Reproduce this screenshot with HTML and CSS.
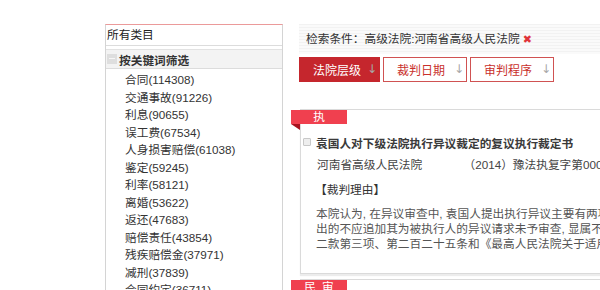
FILE: index.html
```html
<!DOCTYPE html>
<html lang="zh-CN">
  <head>
    <meta charset="UTF-8" />
    <title>裁判文书检索</title>
    <link rel="stylesheet" href="styles.css">
  </head>
  <body>
    <div class="page">
      <!-- 左侧类目 -->
      <aside class="category">
        <div class="cat-title">所有类目</div>
        <div class="cat-group"><span class="fold"></span>按关键词筛选</div>
        <ul class="keyword-list">
          <li>合同(114308)</li>
          <li>交通事故(91226)</li>
          <li>利息(90655)</li>
          <li>误工费(67534)</li>
          <li>人身损害赔偿(61038)</li>
          <li>鉴定(59245)</li>
          <li>利率(58121)</li>
          <li>离婚(53622)</li>
          <li>返还(47683)</li>
          <li>赔偿责任(43854)</li>
          <li>残疾赔偿金(37971)</li>
          <li>减刑(37839)</li>
          <li>合同约定(36711)</li>
        </ul>
      </aside>

      <!-- 检索结果 -->
      <main class="results">
        <div class="search-cond">
          检索条件：高级法院:河南省高级人民法院<span class="remove">✖</span>
        </div>

        <div class="sort-bar">
          <button class="sort-btn active">法院层级<span class="arrow">↓</span></button>
          <button class="sort-btn">裁判日期<span class="arrow">↓</span></button>
          <button class="sort-btn">审判程序<span class="arrow">↓</span></button>
        </div>

        <div class="case-card">
          <span class="tag">执</span>
          <div class="case-title">
            <span class="check"></span>袁国人对下级法院执行异议裁定的复议执行裁定书
          </div>
          <div class="case-info">
            <span class="court">河南省高级人民法院</span>
            <span class="case-no">（2014）豫法执复字第00010号</span>
          </div>
          <div class="reason-label">【裁判理由】</div>
          <p class="reason">
            本院认为, 在异议审查中, 袁国人提出执行异议主要有两项理由, 一是<br />
            出的不应追加其为被执行人的异议请求未予审查, 显属不当, 违反了<br />
            二款第三项、第二百二十五条和《最高人民法院关于适用〈中华人民
          </p>
        </div>

        <div class="case-card">
          <span class="tag tag-wide">民审</span>
        </div>
      </main>
    </div>
  </body>
</html>
```

FILE: styles.css
```css
* {
  margin: 0;
  padding: 0;
  box-sizing: border-box;
}

body {
  font-family: "Liberation Sans", "Noto Sans CJK SC", sans-serif;
  font-size: 11.7px;
  color: #333;
  background: white;
  height: 290px;
  overflow: hidden;
}

.page {
  display: flex;
  align-items: flex-start;
  gap: 16px;
  padding: 24px 0 0 105px;
}

/* 左侧类目 */
.category {
  flex: none;
  width: 178px;
  height: 320px;
  border: 1px solid #d4d4d4;
  border-top-color: #eb9a9a;
}

.cat-title {
  height: 21px;
  line-height: 20px;
  padding-left: 1px;
  color: #222;
  border-bottom: 1px solid #dcdcdc;
}

.cat-group {
  display: flex;
  align-items: center;
  height: 20px;
  margin-top: 3px;
  padding-left: 1px;
  background: #f3f3f3;
  border-top: 1px solid #e2e2e2;
  border-bottom: 1px solid #dcdcdc;
  font-weight: bold;
  color: #333;
}

.fold {
  position: relative;
  width: 10px;
  height: 10px;
  margin-right: 2px;
  background: #dedede;
}

.fold::after {
  content: "";
  position: absolute;
  left: 2px;
  right: 2px;
  top: 4px;
  height: 1px;
  background: #f6f6f6;
}

.keyword-list {
  list-style: none;
  padding: 2px 0 0 19px;
}

.keyword-list li {
  line-height: 17.5px;
  white-space: nowrap;
}

/* 检索结果 */
.results {
  flex: none;
  width: 330px;
}

.search-cond {
  height: 30px;
  line-height: 30px;
  padding-left: 7px;
  white-space: nowrap;
  background: repeating-linear-gradient(#f2f2f2 0, #f2f2f2 1px, #fafafa 1px, #fafafa 3px);
}

.remove {
  margin-left: 3px;
  color: #e0333b;
  font-family: "DejaVu Sans", sans-serif;
  font-size: 11px;
}

.sort-bar {
  display: flex;
  gap: 3px;
  margin-top: 3px;
}

.sort-btn {
  position: relative;
  width: 84px;
  height: 25px;
  padding-left: 13px;
  text-align: left;
  font-family: inherit;
  font-size: 12px;
  color: #c9302c;
  background: white;
  border: 1px solid #d05252;
  cursor: pointer;
}

.sort-btn.active {
  width: 81px;
  color: white;
  background: #c5262d;
  border-color: #c5262d;
}

.arrow {
  position: absolute;
  right: 2px;
  top: 4px;
  color: #a8a8a8;
  font-family: "DejaVu Sans", sans-serif;
  font-size: 12px;
}

.case-card {
  position: relative;
  width: 320px;
  margin: 27px 0 0 1px;
  padding: 23px 0 22px 2px;
  border: 1px solid #dadada;
  box-shadow: 0 2px 1px #ececec;
  white-space: nowrap;
}

.case-card + .case-card {
  margin-top: 5px;
}

.tag {
  position: absolute;
  left: -10px;
  top: 0;
  width: 56px;
  height: 14px;
  line-height: 14px;
  text-align: center;
  color: white;
  background: #f0404f;
}

.tag-wide {
  letter-spacing: 6px;
  padding-left: 6px;
}

.tag::after {
  content: "";
  position: absolute;
  left: 0;
  top: 14px;
  border-top: 6px solid #a8121e;
  border-left: 9px solid transparent;
}

.case-title {
  display: flex;
  align-items: center;
  height: 18px;
  font-weight: bold;
  color: #3a3a3a;
}

.check {
  width: 8px;
  height: 8px;
  margin-right: 5px;
  border: 1px solid #c8c8c8;
  background: #eee;
  border-radius: 1px;
}

.case-info {
  height: 18px;
  line-height: 18px;
  margin-top: 5px;
  padding-left: 14px;
  color: #444;
}

.case-no {
  margin-left: 38px;
}

.reason-label {
  height: 18px;
  line-height: 18px;
  margin-top: 7px;
  padding-left: 12px;
  color: #333;
}

.reason {
  margin-top: 7px;
  padding-left: 13px;
  line-height: 15px;
  color: #555;
}
```
